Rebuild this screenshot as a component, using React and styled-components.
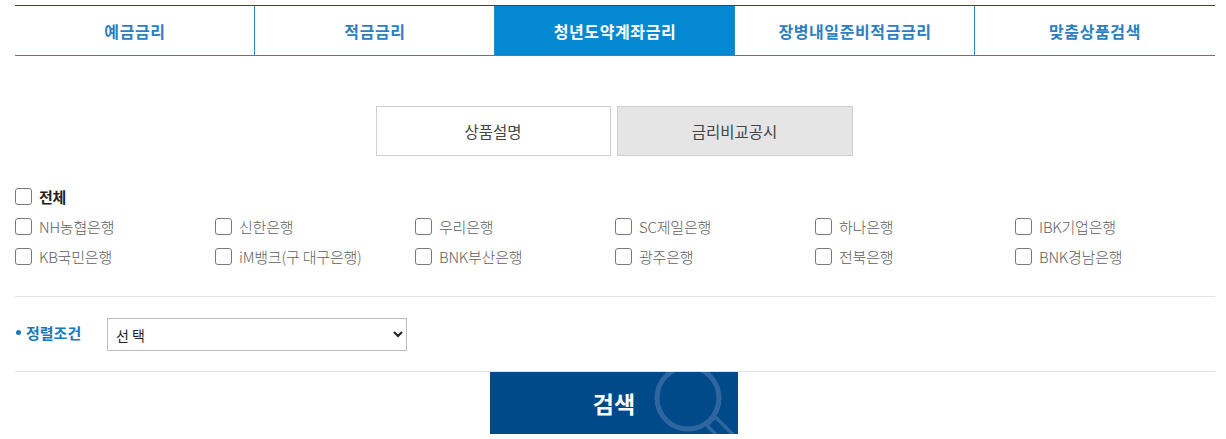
import React from "react";
import styled, { createGlobalStyle } from "styled-components";

const Global = createGlobalStyle`
  html, body { margin: 0; padding: 0; background: #fff; }
  body { font-family: "Noto Sans CJK KR", "Noto Sans", sans-serif; }
  * { box-sizing: border-box; }
`;

const Page = styled.div`
  width: 1200px;
  margin: 5px 0 0 15px;
`;

const TabBar = styled.ul`
  display: grid;
  grid-template-columns: repeat(5, 1fr);
  list-style: none;
  margin: 0;
  padding: 0;
  border-top: 1px solid #1d4e6f;
  border-bottom: 1px solid #2a87c6;
`;

const Tab = styled.li`
  height: 49px;
  display: flex;
  align-items: center;
  justify-content: center;
  font-size: 16px;
  font-weight: 700;
  color: ${(p) => (p.$active ? "#fff" : "#2b80c3")};
  background: ${(p) => (p.$active ? "#0488d2" : "#fff")};
  border-left: ${(p) => (p.$first ? "none" : "1px solid #2a87c6")};
  margin-left: ${(p) => (p.$first ? "0" : "-1px")};
  letter-spacing: 0.6px;
`;

const SubTabs = styled.div`
  display: flex;
  justify-content: center;
  gap: 6px;
  margin-top: 50px;
  padding-right: 2px;
`;

const SubTab = styled.div`
  width: ${(p) => (p.$active ? "236px" : "235px")};
  height: 50px;
  display: flex;
  align-items: center;
  justify-content: center;
  font-size: 15.5px;
  color: #444;
  border: 1px solid #cfcfcf;
  background: ${(p) => (p.$active ? "#e5e5e5" : "#fff")};
`;

const Checks = styled.div`
  margin-top: 25px;
  padding-bottom: 25px;
  border-bottom: 1px solid #e3e3e3;
`;

const CheckGrid = styled.div`
  display: grid;
  grid-template-columns: repeat(6, 200px);
`;

const CheckItem = styled.label`
  height: 30px;
  display: flex;
  align-items: center;
  gap: 7px;
  font-size: 15px;
  color: ${(p) => (p.$bold ? "#222" : "#5e5e5e")};
  font-weight: ${(p) => (p.$bold ? 700 : 300)};
  letter-spacing: -0.2px;
  cursor: pointer;
`;

const Box = styled.span`
  width: 17px;
  height: 17px;
  border: 1px solid #7a7a7a;
  border-radius: 3px;
  background: #fff;
  flex: none;
`;

const SortRow = styled.div`
  display: flex;
  align-items: center;
  height: 75px;
  padding-top: 1px;
  border-bottom: 1px solid #e3e3e3;
`;

const SortLabel = styled.div`
  width: 92px;
  font-size: 15px;
  font-weight: 700;
  color: #1a78bd;
  margin-top: -4px;
  display: flex;
  align-items: center;
  gap: 5px;
  &::before {
    content: "";
    width: 5px;
    height: 5px;
    margin-left: 1px;
    border-radius: 50%;
    background: #1a78bd;
  }
`;

const Select = styled.select`
  width: 300px;
  height: 33px;
  border: 1px solid #bdbdbd;
  border-radius: 0;
  background: #fff;
  font-family: "Noto Sans CJK KR", sans-serif;
  font-size: 14px;
  color: #222;
  padding: 0 4px;
`;

const SearchWrap = styled.div`
  display: flex;
  justify-content: center;
  padding-right: 2px;
`;

const SearchButton = styled.button`
  position: relative;
  overflow: hidden;
  width: 248px;
  height: 62px;
  border: none;
  background: #004a8a;
  color: #fff;
  font-family: "Noto Sans CJK KR", sans-serif;
  font-size: 23px;
  font-weight: 700;
  padding: 0;
  cursor: pointer;
  & span { position: relative; }
`;

const Magnifier = styled.svg`
  position: absolute;
  left: 0;
  top: 0;
  width: 248px;
  height: 62px;
`;

const tabs = ["예금금리", "적금금리", "청년도약계좌금리", "장병내일준비적금금리", "맞춤상품검색"];
const banks = [
  "NH농협은행", "신한은행", "우리은행", "SC제일은행", "하나은행", "IBK기업은행",
  "KB국민은행", "iM뱅크(구 대구은행)", "BNK부산은행", "광주은행", "전북은행", "BNK경남은행",
];

export default function App() {
  return (
    <>
      <Global />
      <Page>
        <TabBar>
          {tabs.map((t, i) => (
            <Tab key={t} $first={i === 0} $active={i === 2}>{t}</Tab>
          ))}
        </TabBar>
        <SubTabs>
          <SubTab>상품설명</SubTab>
          <SubTab $active>금리비교공시</SubTab>
        </SubTabs>
        <Checks>
          <CheckItem $bold><Box />전체</CheckItem>
          <CheckGrid>
            {banks.map((b) => (
              <CheckItem key={b}><Box />{b}</CheckItem>
            ))}
          </CheckGrid>
        </Checks>
        <SortRow>
          <SortLabel>정렬조건</SortLabel>
          <Select defaultValue="">
            <option value="">선 택</option>
          </Select>
        </SortRow>
        <SearchWrap>
          <SearchButton>
            <Magnifier viewBox="0 0 248 62">
              <circle cx="198" cy="26" r="31" fill="none" stroke="#2f669f" strokeWidth="5" />
              <g transform="rotate(45 221 49)">
                <rect x="221" y="43" width="40" height="12" rx="2" fill="none" stroke="#2f669f" strokeWidth="3.5" />
              </g>
            </Magnifier>
            <span>검색</span>
          </SearchButton>
        </SearchWrap>
      </Page>
    </>
  );
}
